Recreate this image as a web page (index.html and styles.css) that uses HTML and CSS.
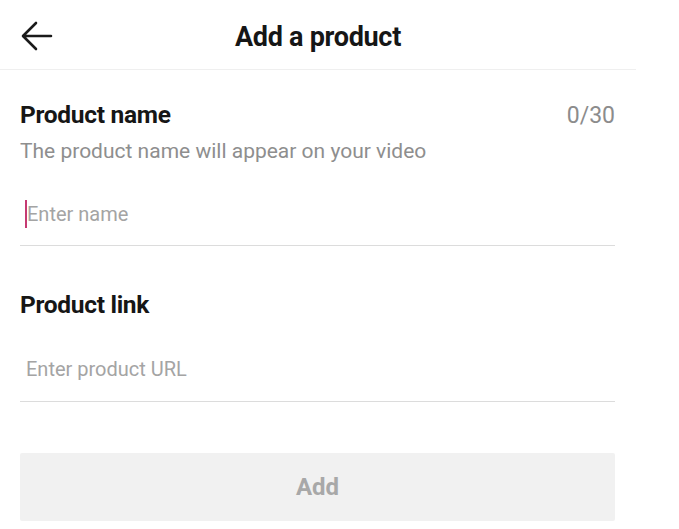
FILE: index.html
```html
<!DOCTYPE html>
<html lang="en">
<head>
<meta charset="utf-8">
<title>Add a product</title>
<link rel="stylesheet" href="styles.css">
</head>
<body>
<div class="screen">
  <header class="topbar">
    <div class="back">
      <svg width="32" height="30" viewBox="0 0 32 30" fill="none" stroke="#1a1a1a" stroke-width="2.6" stroke-linecap="round" stroke-linejoin="round">
        <path d="M30 15H3M15 2L2 15l13 13"/>
      </svg>
    </div>
    <h1 class="title">Add a product</h1>
    <div></div>
  </header>
  <main class="form">
    <section class="field field-name">
      <div class="label-row">
        <span class="label">Product name</span>
        <span class="counter">0/30</span>
      </div>
      <p class="hint">The product name will appear on your video</p>
      <div class="input">
        <span class="caret"></span><span class="placeholder">Enter name</span>
      </div>
    </section>
    <section class="field field-link">
      <div class="label-row">
        <span class="label">Product link</span>
      </div>
      <div class="input input-link">
        <span class="placeholder">Enter product URL</span>
      </div>
    </section>
    <button class="add-btn" type="button">Add</button>
  </main>
</div>
</body>
</html>
```
FILE: styles.css
```css
* { box-sizing: border-box; }
html, body { margin: 0; padding: 0; background: #fff; }
body { font-family: Roboto, "Noto Sans", sans-serif; color: #161616; }
.screen { width: 636px; }
.topbar {
  height: 70px;
  border-bottom: 1px solid #efefef;
  display: grid;
  grid-template-columns: 1fr auto 1fr;
  align-items: center;
}
.back { padding-left: 21px; padding-top: 2px; display: flex; }
.title {
  margin: 0;
  font-size: 27px;
  font-weight: 700;
  letter-spacing: -0.3px;
  line-height: 34px;
  padding-top: 4px;
}
.form { padding: 0 21px 0 20px; }
.field-name { padding-top: 31px; }
.label-row { display: flex; justify-content: space-between; align-items: baseline; }
.label { font-size: 24.5px; font-weight: 700; letter-spacing: -0.3px; line-height: 28px; }
.counter { font-size: 23px; color: #8c8c8c; line-height: 28px; }
.hint { margin: 8px 0 0; font-size: 21px; color: #8e8e8e; line-height: 26px; }
.input {
  display: flex;
  align-items: flex-end;
  height: 82px;
  border-bottom: 1.5px solid #dcdcdc;
  padding-left: 5px;
  padding-bottom: 17px;
}
.caret { width: 2px; height: 28px; background: #c63a72; }
.placeholder { font-size: 20px; color: #a4a4a4; line-height: 28px; }
.field-link { padding-top: 45px; }
.input-link { height: 83px; padding-left: 6px; padding-bottom: 18px; }
.add-btn {
  display: block;
  width: 100%;
  margin-top: 51px;
  height: 68px;
  border: none;
  border-radius: 2px;
  background: #f1f1f1;
  color: #a8a8a8;
  font-family: Roboto, sans-serif;
  font-size: 24px;
  font-weight: 700;
}
```
